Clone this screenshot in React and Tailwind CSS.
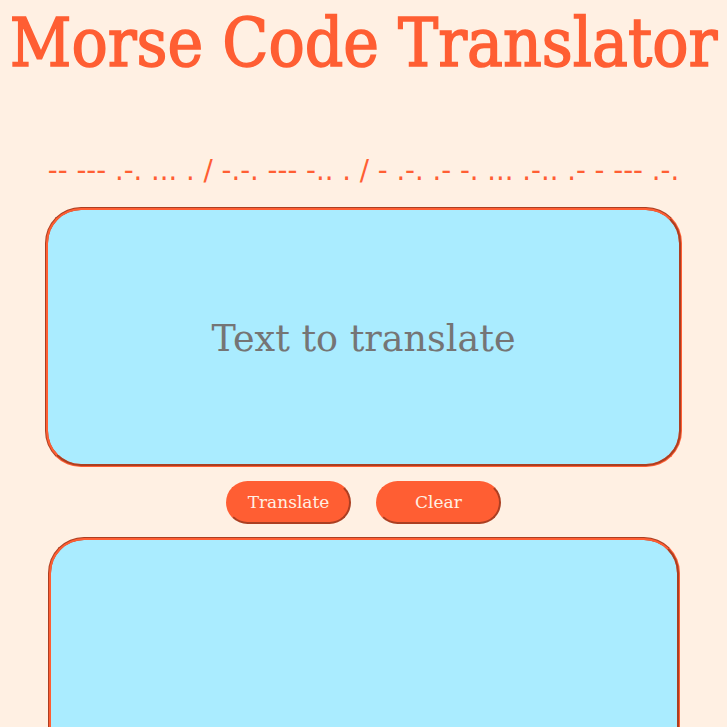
export default function App() {
  return (
    <div className="min-h-[727px] bg-[#fff0e3] flex flex-col items-center overflow-hidden">
      <h1 className="mt-[3px] text-[#ff5e33] text-[67px] leading-[80px] font-normal whitespace-nowrap [-webkit-text-stroke:1.5px_#ff5e33] font-['DejaVu_Serif_Condensed','DejaVu_Serif',serif]">
        Morse Code Translator
      </h1>
      <p className="mt-[72px] text-[#ff5e33] text-[27.5px] leading-[30px] whitespace-nowrap font-['DejaVu_Sans',sans-serif]">
        -- --- .-. ... . / -.-. --- -.. . / - .-. .- -. ... .-.. .- - --- .-.
      </p>
      <textarea
        placeholder="Text to translate"
        className="mt-[22px] w-[637px] h-[260px] shrink-0 rounded-[36px] border-[3px] [border-style:groove] border-[#ff5e33] bg-[#aaecff] text-center pt-[107px] text-[36.5px] leading-[44px] resize-none outline-none placeholder:text-[#757575] font-['DejaVu_Serif',serif]"
      />
      <div className="mt-[14px] flex gap-[25px]">
        <button className="w-[125px] h-[43px] rounded-full border-2 [border-style:outset] border-[#ff5e33] bg-[#ff5e33] text-[#fff0e3] text-[17px] font-['DejaVu_Serif',serif]">
          Translate
        </button>
        <button className="w-[125px] h-[43px] rounded-full border-2 [border-style:outset] border-[#ff5e33] bg-[#ff5e33] text-[#fff0e3] text-[17px] font-['DejaVu_Serif',serif]">
          Clear
        </button>
      </div>
      <textarea
        className="mt-[13px] w-[632px] h-[259px] shrink-0 rounded-[36px] border-[3px] [border-style:groove] border-[#ff5e33] bg-[#aaecff] resize-none outline-none"
      />
    </div>
  );
}
